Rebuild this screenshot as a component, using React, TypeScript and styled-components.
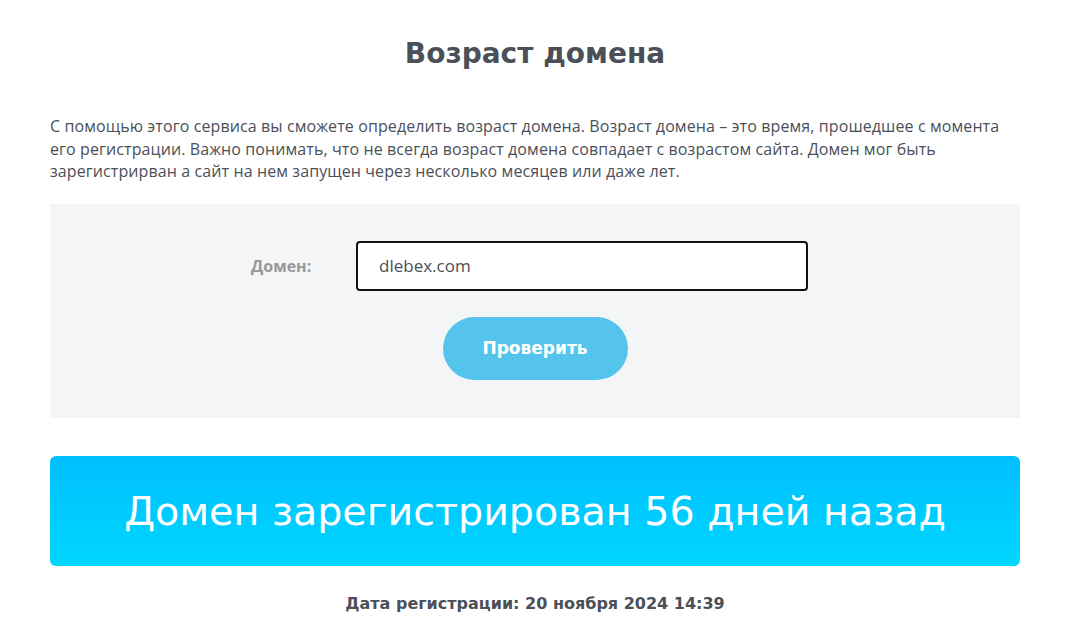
import React from "react";
import styled, { createGlobalStyle } from "styled-components";

const Global = createGlobalStyle`
  html, body { margin: 0; padding: 0; background: #fff; }
  body { font-family: "Open Sans", "Noto Sans", sans-serif; color: #4b5058; }
  * { box-sizing: border-box; }
`;

const heading = `"DejaVu Sans", "Open Sans", sans-serif`;

const Page = styled.main`
  width: 970px;
  margin-left: 50px;
  padding-top: 34px;
  display: flex;
  flex-direction: column;
`;

const Title = styled.h1`
  margin: 0;
  text-align: center;
  font-family: ${heading};
  font-size: 28px;
  line-height: 40px;
  font-weight: 700;
  color: #4b5058;
`;

const Intro = styled.p`
  margin: 41px 0 0;
  font-size: 16px;
  line-height: 22.5px;
  letter-spacing: 0.1px;
  color: #4b5058;
`;

const FormBox = styled.section`
  margin-top: 21px;
  height: 214px;
  background: #f3f5f6;
  display: flex;
  flex-direction: column;
  align-items: center;
  padding-top: 37px;
  gap: 26px;
`;

const Row = styled.div`
  display: flex;
  align-items: center;
  margin-right: 11px;
`;

const Label = styled.label`
  width: 105px;
  font-size: 16px;
  font-weight: 700;
  color: #999;
`;

const Input = styled.input`
  width: 452px;
  height: 50px;
  border: 2px solid #111;
  border-radius: 4px;
  padding: 0 21px;
  font-family: "Open Sans", sans-serif;
  font-size: 17px;
  color: #4b5058;
  background: #fff;
  outline: none;
`;

const Button = styled.button`
  width: 185px;
  height: 63px;
  border: none;
  border-radius: 32px;
  background: #55c4ec;
  color: #fff;
  font-family: ${heading};
  font-weight: 700;
  font-size: 17px;
  cursor: pointer;
`;

const Result = styled.div`
  margin-top: 38px;
  height: 110px;
  border-radius: 6px;
  background: linear-gradient(180deg, #00bfff 0%, #00d6ff 100%);
  display: flex;
  align-items: center;
  justify-content: center;
  color: #fff;
  font-family: ${heading};
  font-size: 39.6px;
  font-weight: 400;
`;

const DateLine = styled.p`
  margin: 28px 0 0;
  text-align: center;
  font-family: ${heading};
  font-size: 16px;
  font-weight: 700;
  color: #4b5058;
`;

export default function App() {
  return (
    <>
      <Global />
      <Page>
        <Title>Возраст домена</Title>
        <Intro>
          С помощью этого сервиса вы сможете определить возраст домена. Возраст домена – это время, прошедшее с момента
          его регистрации. Важно понимать, что не всегда возраст домена совпадает с возрастом сайта. Домен мог быть
          зарегистрирван а сайт на нем запущен через несколько месяцев или даже лет.
        </Intro>
        <FormBox>
          <Row>
            <Label htmlFor="domain">Домен:</Label>
            <Input id="domain" defaultValue="dlebex.com" />
          </Row>
          <Button>Проверить</Button>
        </FormBox>
        <Result>Домен зарегистрирован 56 дней назад</Result>
        <DateLine>Дата регистрации: 20 ноября 2024 14:39</DateLine>
      </Page>
    </>
  );
}
